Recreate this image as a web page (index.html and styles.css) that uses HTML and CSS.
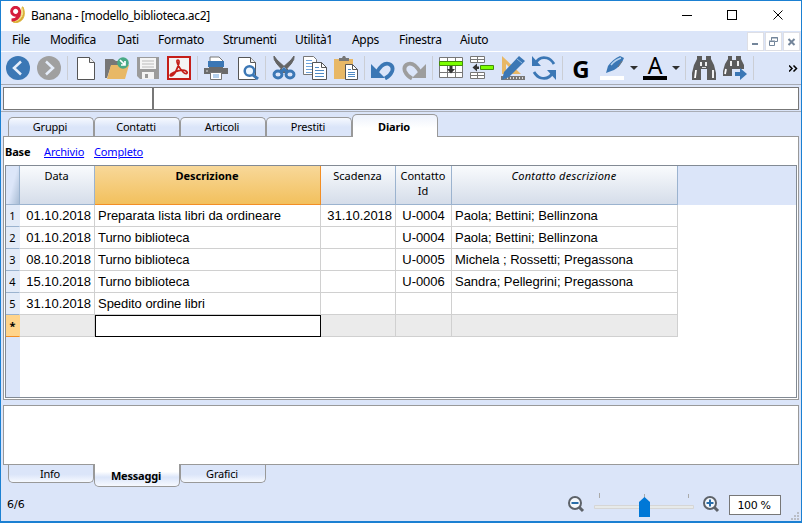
FILE: index.html
```
<!DOCTYPE html>
<html lang="it">
<head>
<meta charset="utf-8">
<title>Banana - [modello_biblioteca.ac2]</title>
<link rel="stylesheet" href="styles.css">
</head>
<body>
<div class="window">
  <header class="titlebar">
    <svg class="logo" width="16" height="18" viewBox="0 0 16 18"><path d="M13 1C15 6 15 12 8 15L3 15Q4 17 8 16.5C15 15 17 8 14 1Z" fill="#d6a62c" stroke="#dfb640"/><path d="M12.6 2C14 8 12 13 6 15Q13 13 13 3" fill="none" stroke="#f2df89" stroke-width="1.5"/><path d="M10.5 6.2A4 4 0 1 1 10.5 4.5C11.5 10 8 14 2.500 14" fill="none" stroke="#d51d3c" stroke-width="2.900"/></svg>
    <h1 class="title">Banana - [modello_biblioteca.ac2]</h1>
    <svg class="window-buttons" width="102" height="12" viewBox="0 0 102 12" fill="none" stroke="#000"><path d="M0 6.500h10M45.500 1.500h9v9h-9z" shape-rendering="crispEdges"/><path d="M91.500 1.500l9 9M100.500 1.500l-9 9"/></svg>
  </header>
  <nav class="menubar">
    <span class="m-file">File</span><span class="m-mod">Modifica</span><span class="m-dati">Dati</span><span class="m-form">Formato</span><span class="m-str">Strumenti</span><span class="m-uti">Utilità1</span><span class="m-apps">Apps</span><span class="m-fin">Finestra</span><span class="m-aiu">Aiuto</span>
    <div class="mdi">
      <svg viewBox="0 0 15 17"><path d="M4 10h6v2H4z" fill="#73859a"/></svg>
      <svg viewBox="0 0 15 17" fill="none" stroke="#73859a"><path d="M3.500 8.500h5v4h-5zM3 8h6M5.500 7.500V4.500h6v4H9M5 5h7"/></svg>
      <svg viewBox="0 0 15 17"><path d="M4.500 6l6 6M10.500 6l-6 6" stroke="#73859a" stroke-width="2"/></svg>
    </div>
  </nav>
  <div class="toolbar">
    <svg class="icon" viewBox="0 0 24 24"><circle cx="12" cy="12" r="12" fill="#3b77b5"/><path d="M15 5.500L8 12l7 6.500" fill="none" stroke="#e5edfa" stroke-width="2.500"/></svg>
    <svg class="icon" viewBox="0 0 24 24"><circle cx="12" cy="12" r="12" fill="#a0a0a0"/><path d="M9 5.500L16 12l-7 6.500" fill="none" stroke="#e5edfa" stroke-width="2.500"/></svg>
    <i class="sep"></i>
    <svg class="icon" viewBox="0 0 24 24"><path d="M3.500 1.500h12l5 5v17h-17z" fill="#fff" stroke="#555"/><path d="M15.500 1.500v5h5" fill="#eee" stroke="#555"/></svg>
    <svg class="icon" viewBox="0 0 24 24"><path d="M0 3h8l3 2h7v5H6L2 22H0z" fill="#777"/><path d="M6 9h18l-4 14H2z" fill="#e8b866"/><circle cx="18" cy="7" r="5.800" fill="#48a985"/><path d="M15 4l5 5M20 5v4h-4" fill="none" stroke="#fff" stroke-width="1.700"/></svg>
    <svg class="icon" viewBox="0 0 24 24"><path d="M1 1h22v22H4l-3-3z" fill="#9b9b9b"/><path d="M4 2h16v11H4z" fill="#f5f5f5"/><path d="M6 5h12M6 8h12M6 11h12" stroke="#bbb"/><path d="M6 16h12v7H6z" fill="#f3f3f3"/><path d="M9 18h3v4H9z" fill="#999"/></svg>
    <svg class="icon" viewBox="0 0 24 24"><path d="M1 1h22v22H1z" fill="#f4f3f3" stroke="#c51e19" stroke-width="2"/><path d="M4 18C1 21 6 21 9 15C12 9 13 4 11 4C8 4 12 12 16 16C19 19 22 17 19 15C16 13 8 15 4 18Z" fill="none" stroke="#c51e19" stroke-width="1.700"/></svg>
    <i class="sep"></i>
    <svg class="icon" viewBox="0 0 24 24"><path d="M6 1h9l4 4v5H6z" fill="#fff" stroke="#777"/><path d="M0 12h5v-1h14v1h5v6H0z" fill="#6b6b6b"/><path d="M4 5h16v6H4z" fill="#3b77b5"/><path d="M6.500 16.500h11v7h-11z" fill="#fff" stroke="#777"/><path d="M9 19h6M9 21h6" stroke="#6fa4dc"/><path d="M2 15h2" stroke="#ddd"/></svg>
    <svg class="icon" viewBox="0 0 24 24"><path d="M3.500 1.500h12l5 5v17h-17z" fill="#fff" stroke="#555"/><path d="M15.500 1.500v5h5" fill="#eee" stroke="#555"/><circle cx="14.500" cy="15" r="4.800" fill="#eef7ff" stroke="#3b77b5" stroke-width="2.500"/><path d="M18 19l5 4" stroke="#3b77b5" stroke-width="3"/></svg>
    <i class="sep"></i>
    <svg class="icon" viewBox="0 0 24 24"><path d="M2 0Q1 3 5 8l8 9 3-3L5 4zM22 0Q23 3 19 8l-8 9-3-3L19 4z" fill="#646464" stroke="#646464"/><g fill="none" stroke="#3b77b5" stroke-width="2.900"><ellipse cx="6" cy="18.500" rx="4" ry="3.500"/><ellipse cx="18" cy="18.500" rx="4" ry="3.500"/></g><path d="M9 16l3-3 3 3" fill="none" stroke="#3b77b5" stroke-width="3"/></svg>
    <svg class="icon" viewBox="0 0 24 24"><path d="M.5.500h10l3 3v15H.5z" fill="#fff" stroke="#777"/><path d="M3 4.500h6M3 7.500h8M3 10.500h6M3 13.500h6M3 16.500h6" stroke="#6fa4dc"/><path d="M9.500 6.500h9l5 5v12h-14z" fill="#fff" stroke="#555"/><path d="M18.500 6.500v5h5" fill="none" stroke="#555"/><path d="M12 11.500h4M12 14.500h9M12 17.500h9M12 20.500h9" stroke="#508bc5"/></svg>
    <svg class="icon" viewBox="0 0 24 24"><path d="M0 3h19v20H0z" fill="#e8b866"/><path d="M5 2h3l1-2h2l1 2h3v3H5z" fill="#777"/><path d="M11.500 8.500h7l5 5v10h-12z" fill="#fff" stroke="#555"/><path d="M18.500 8.500v5h5" fill="none" stroke="#555"/><path d="M14 13.500h3M14 16.500h7M14 18.500h7M14 20.500h7" stroke="#508bc5"/></svg>
    <i class="sep"></i>
    <svg class="icon" viewBox="0 0 24 24"><path d="M6 16Q12 6 18 8Q23 10 21 15.500Q19 20 14 22.500" fill="none" stroke="#3b77b5" stroke-width="3.800"/><path d="M0 8v14h14z" fill="#3b77b5"/></svg>
    <svg class="icon" viewBox="0 0 24 24"><path d="M18 16Q12 6 6 8Q1 10 3 15.500Q5 20 10 22.500" fill="none" stroke="#9d9d9d" stroke-width="3.800"/><path d="M24 8v14H10z" fill="#9d9d9d"/></svg>
    <i class="sep"></i>
    <svg class="icon" viewBox="0 0 24 24"><path d="M.5 1.500h23v20H.5zM0 16.500h24M8.500 1v21M16.500 1v21" fill="#fff" stroke="#777"/><path d="M.5 5.500h23v4H.5z" fill="#7cff00" stroke="#438d0a"/><path d="M10.500 10h3v3h2.500L12 17.500 8 13h2.500z" fill="#333"/></svg>
    <svg class="icon" viewBox="0 0 24 24"><path d="M.5.500h14v6H.5zM0 3.500h15M7.500 0v7M.5 16.500h14v6H.5zM0 19.500h15M7.500 16v7" fill="#fff" stroke="#777"/><path d="M10.500 9.500h13v4h-13z" fill="#7cff00" stroke="#438d0a"/><path d="M9 10.500v2.500H7v2.500L2.500 11.500 7 7.500v3z" fill="#333"/></svg>
    <svg class="icon" viewBox="0 0 24 24"><path d="M1 0v18h19z" fill="#e8b866"/><path d="M5 8v7h7z" fill="#dce7fa"/><path d="M0 20h24v4H0z" fill="#777"/><path d="M3.500 21v2M6.500 21v2M9.500 21v2M12.500 21v2M15.500 21v2M18.500 21v2M21.500 21v2" stroke="#ddd"/><path d="M18 0l6 5L8 21l-7 3 2-8z" fill="#3b77b5"/><path d="M16 3l5 4" stroke="#94bce4"/></svg>
    <svg class="icon" viewBox="0 0 24 24" fill="none" stroke="#3b77b5" stroke-width="2.800"><path d="M3 8Q7 0 15 2Q19 3 22 8M21 16Q17 24 9 22Q5 21 2 16"/><path d="M0 0v10h9zM24 24V14h-9z" fill="#3b77b5" stroke="none"/></svg>
    <i class="sep"></i>
    <b class="icon bold-letter">G</b>
    <svg class="icon flush" viewBox="0 0 24 24"><path d="M6 17l2-7Q13 3 20 0l4 2Q21 10 14 14z" fill="#3b77b5"/><path d="M11 9Q15 4 21 2" fill="none" stroke="#b6d3ef" stroke-width="1.500"/><path d="M18 11l4-6" stroke="#777"/><path d="M0 20h24v4H0z" fill="#fff"/></svg><i class="drop drop-wide"></i>
    <div class="icon flush font-color"><span>A</span></div><i class="drop"></i>
    <i class="sep"></i>
    <svg class="icon" viewBox="0 0 24 24"><path d="M5 0h5v4h4V0h5v3l3 6 2 8v7h-9V13H9v11H0v-7l2-8 3-6z" fill="#5c5c5c"/><path d="M9 6v4M14 6v4M4 14l-1 8M21 14v8" stroke="#fff" stroke-width="1.800"/><path d="M10 11.500h4" stroke="#ddd"/></svg>
    <svg class="icon" viewBox="0 0 24 24"><path d="M5 0h4v4h4V0h5v3l3 6v4H9v7H0v-5l2-7 3-5z" fill="#5c5c5c"/><path d="M8 5v5M15 5v5M3 13l-1 5" stroke="#fff" stroke-width="1.800"/><path d="M12 16h5v-4l7 6-7 6v-4h-5z" fill="#3b77b5"/></svg>
    <i class="sep"></i>
    <svg class="more" viewBox="0 0 9 7" fill="none" stroke="#000" stroke-width="1.500"><path d="M0 .5l3 3-3 3M4.500.5l3 3-3 3"/></svg>
  </div>
  <div class="entry"><div class="entry-ref"></div><div class="entry-value"></div></div>
  <div class="tabs">
    <div class="tab">Gruppi</div><div class="tab">Contatti</div><div class="tab">Articoli</div><div class="tab">Prestiti</div><div class="tab active">Diario</div>
  </div>
  <main class="panel">
    <div class="views"><b>Base</b><a class="archive">Archivio</a><a>Completo</a></div>
    <div class="sheet">
      <div class="grid">
        <div class="head corner"></div><div class="head">Data</div><div class="head selected">Descrizione</div><div class="head">Scadenza</div><div class="head">Contatto<br>Id</div><div class="head italic">Contatto descrizione</div><div class="head filler"></div>
        <div class="num">1</div><div class="date">01.10.2018</div><div>Preparata lista libri da ordineare</div><div class="date">31.10.2018</div><div class="center">U-0004</div><div>Paola; Bettini; Bellinzona</div>
        <div class="num">2</div><div class="date">01.10.2018</div><div>Turno biblioteca</div><div></div><div class="center">U-0004</div><div>Paola; Bettini; Bellinzona</div>
        <div class="num">3</div><div class="date">08.10.2018</div><div>Turno biblioteca</div><div></div><div class="center">U-0005</div><div>Michela ; Rossetti; Pregassona</div>
        <div class="num">4</div><div class="date">15.10.2018</div><div>Turno biblioteca</div><div></div><div class="center">U-0006</div><div>Sandra; Pellegrini; Pregassona</div>
        <div class="num">5</div><div class="date">31.10.2018</div><div>Spedito ordine libri</div><div></div><div></div><div></div>
        <div class="num current">*</div><div class="new"></div><div class="cursor"></div><div class="new"></div><div class="new"></div><div class="new"></div>
      </div>
      <div class="gutter"></div>
    </div>
  </main>
  <section class="messages"></section>
  <div class="tabs bottom-tabs"><div class="tab">Info</div><div class="tab active">Messaggi</div><div class="tab">Grafici</div></div>
  <footer class="status">
    <span class="count">6/6</span>
    <svg class="zoom-controls" width="152" height="26" viewBox="0 0 152 26"><g fill="#f5f8fc" stroke="#5d6269" stroke-width="2"><circle cx="7" cy="11" r="6"/><circle cx="142" cy="11" r="6"/></g><path d="M11 15l4 4M146 15l4 4" stroke="#5d6269" stroke-width="3"/><path d="M3.500 11h7M138.500 11h7M142 7.500v7" stroke="#286ca8" stroke-width="2"/><path d="M26.500 13.500h99v3h-99z" fill="#e7eaea" stroke="#d6d6d6"/><path d="M31.500 1v5M76.500 2v5M120.500 2v4" stroke="#aaa"/><path d="M71 10l5.500-5L82 10v15H71z" fill="#0078d7"/></svg>
    <span class="percent">100 %</span>
    <svg class="grip" width="8" height="8" viewBox="0 0 8 8"><path d="M6 0h2v2H6zM6 3h2v2H6zM3 3h2v2H3zM0 6h2v2H0zM3 6h2v2H3zM6 6h2v2H6z" fill="#b9bdc6"/></svg>
  </footer>
</div>
</body>
</html>
```
FILE: styles.css
```
* { box-sizing: border-box; }
body { margin: 0; overflow: hidden; color: #000; }
.window { width: 802px; height: 523px; background: #dbe5f9; border: 1px solid #1b80d2; border-bottom-width: 2px; display: flex; flex-direction: column; }
.titlebar { height: 30px; flex: none; background: #fff; display: flex; align-items: center; padding: 0 12px 0 8px; }
.logo { margin-top: -3px; }
.title { font: 400 12px/20px "Noto Sans", sans-serif; letter-spacing: -.33px; margin: 0 auto 0 6px; white-space: nowrap; }
.window-buttons { flex: none; margin-top: -2px; margin-right: 5px; }
.menubar { height: 20px; flex: none; display: flex; padding-left: 11px; gap: 20px; font: 12px/18px "Noto Sans", sans-serif; letter-spacing: -.3px; white-space: nowrap; }
.m-file { width: 18px; }
.m-mod { width: 47px; }
.m-dati { width: 21px; }
.m-form { width: 45px; }
.m-str { width: 52px; }
.m-uti { width: 37px; }
.m-apps { width: 27px; }
.m-fin { width: 41px; }
.m-aiu { width: 30px; }
.mdi { margin-left: auto; display: flex; gap: 1px; padding: 1px 1px 0 1px; }
.mdi svg { width: 17px; height: 19px; background: #fff; border: 1px solid #dedfe5; }
.toolbar { height: 34px; flex: none; display: flex; align-items: center; border-top: 1px solid #fff; border-bottom: 1px solid #a7abb4; padding: 0 3px 0 5px; }
.icon { width: 24px; height: 24px; flex: none; margin-right: 7px; }
.flush { margin-right: 0; }
.sep { width: 1px; height: 24px; background: #cbced5; margin: 0 6px 0 -1px; flex: none; }
.drop { width: 18px; display: flex; flex: none; justify-content: center; }
.drop + .sep { margin-left: 0; }
.drop-wide { width: 19px; }
.drop::after { content: ""; border: 4px solid transparent; border-top-color: #303030; border-bottom: 0; }
.bold-letter { font: 700 24px/26px "Open Sans", sans-serif; text-align: center; }
.font-color { border-bottom: 4px solid #000; font: 23px/19px "Noto Sans", sans-serif; text-align: center; }
.more { width: 9px; height: 7px; margin-left: auto; }
.entry { height: 23px; flex: none; margin: 2px 2px 1px; border: 1px solid #777; background: #fff; display: flex; }
.entry-ref { width: 150px; border-right: 2px solid #777; }
.entry-value { flex: 1; }
.tabs { height: 25px; flex: none; border-top: 1px solid #a9adb6; padding-left: 7px; display: flex; align-items: flex-end; font: 11px/18px "Noto Sans", sans-serif; letter-spacing: -.2px; text-align: center; }
.tab { width: 86px; height: 19px; padding-right: 2px; border: 1px solid #999; border-bottom: 0; border-radius: 5px 5px 0 0; background: linear-gradient(#f6f9ff, #dbe5f9 50%); }
.tab.active { height: 23px; background: linear-gradient(#edf2fc, #fff 60%); font-weight: 700; line-height: 23px; margin-bottom: -1px; position: relative; }
.panel { height: 264px; flex: none; margin: 0 2px; border: 1px solid #999; background: #fff; padding: 0 1px 1px; display: flex; flex-direction: column; }
.views { height: 28px; flex: none; display: flex; font: 11px/30px "Noto Sans", sans-serif; letter-spacing: -.15px; }
.views b { width: 39px; }
.views a { color: #00f; text-decoration: underline; }
.archive { width: 50px; }
.sheet { flex: 1; border: 1px solid #828a94; display: flex; flex-direction: column; }
.grid { display: grid; grid-template-columns: 14px 75px 226px 75px 56px 226px 1fr; grid-template-rows: 39px repeat(6, 22px); flex: none; font: 13px/21px "Liberation Sans", Arial, sans-serif; letter-spacing: -.04px; }
.grid > div { border-right: 1px solid #d0d0d0; border-bottom: 1px solid #d0d0d0; padding-left: 3px; white-space: nowrap; overflow: hidden; }
.grid > .head { font: 11px/15px "Noto Sans", sans-serif; text-align: center; padding: 2px 1px 0 0; background: linear-gradient(#f9fbfd, #d5ddea); border-color: #9bb3cf; }
.grid > .corner { background: linear-gradient(105deg, #dce6f9 50%, #a9bdd5); }
.grid > .selected { font-weight: 700; background: linear-gradient(#f8d899, #f2c05d); border-color: #f28e25; }
.grid > .italic { font-style: italic; letter-spacing: .25px; }
.grid > .filler { background: #dbe5f9; border: 0; }
.grid > .num { grid-column: 1; padding: 0; text-align: center; font: 11px/21px "Noto Sans", sans-serif; background: #e3ebf8; border-color: #e3ebf8; border-bottom-color: #9bb3cf; }
.grid > .date { text-align: right; padding: 0 3px 0 0; }
.grid > .center { text-align: center; padding: 0; }
.grid > .current { background: #ffd48b; border-color: #ffd48b; border-bottom-color: #f28e25; font-weight: 700; }
.grid > .new { background: #ebebeb; }
.grid > .cursor { border: 1px solid #000; }
.gutter { flex: 1; width: 14px; background: #dbe5f9; }
.messages { flex: none; height: 60px; margin: 5px 2px 0; border: 1px solid #999; background: #fff; }
.bottom-tabs { border: 0; height: 24px; align-items: flex-start; }
.bottom-tabs .tab { height: 18px; border: 1px solid #999; border-top: 0; border-radius: 0 0 5px 5px; background: linear-gradient(#dbe5f9 55%, #f6f9ff); }
.bottom-tabs .tab.active { height: 23px; margin-top: -1px; background: linear-gradient(#fff 35%, #dbe5f9 60%, #f6f9ff); line-height: 24px; }
.status { flex: 1; display: flex; align-items: center; padding: 0 2px 1px 6px; font: 11px/18px "DejaVu Sans", sans-serif; }
.count { width: 561px; }
.zoom-controls { flex: none; }
.percent { width: 52px; height: 20px; margin-left: 9px; border: 1px solid #777; background: #fff; text-align: center; letter-spacing: -.4px; line-height: 19px; padding-right: 2px; }
.grip { margin: 22px 0 0 auto; }
```
